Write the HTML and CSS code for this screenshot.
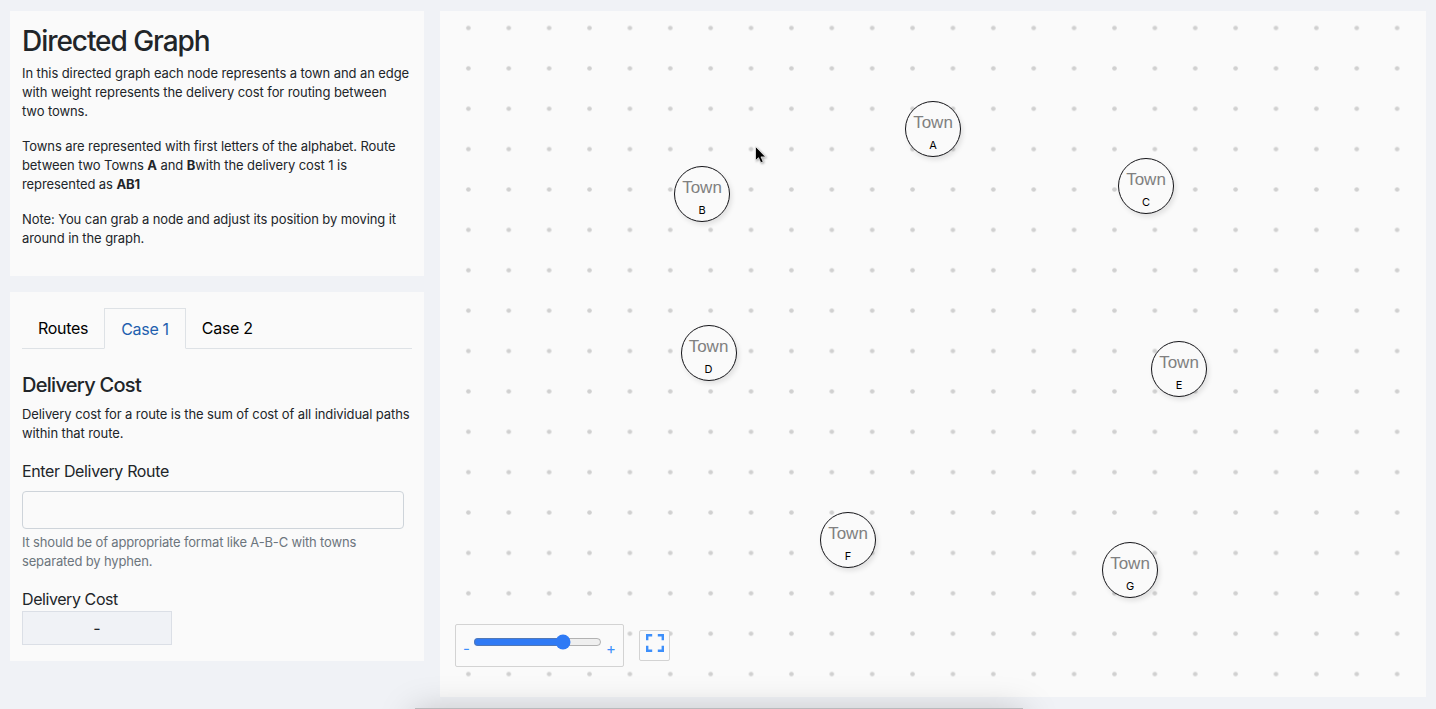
FILE: index.html
```html
<!DOCTYPE html>
<html lang="en">
<head>
<meta charset="utf-8">
<title>Directed Graph</title>
<link rel="stylesheet" href="styles.css">
</head>
<body>
<div class="page">
  <aside class="sidebar">
    <section class="card intro">
      <h1>Directed Graph</h1>
      <p>In this directed graph each node represents a town and an edge<br>with weight represents the delivery cost for routing between<br>two towns.</p>
      <p>Towns are represented with first letters of the alphabet. Route<br>between two Towns <b>A</b> and <b>B</b>with the delivery cost 1 is<br>represented as <b>AB1</b></p>
      <p>Note: You can grab a node and adjust its position by moving it<br>around in the graph.</p>
    </section>
    <section class="card cases">
      <nav class="tabs">
        <a class="tab">Routes</a>
        <a class="tab active">Case 1</a>
        <a class="tab">Case 2</a>
      </nav>
      <h2>Delivery Cost</h2>
      <p>Delivery cost for a route is the sum of cost of all individual paths<br>within that route.</p>
      <label class="label" for="route">Enter Delivery Route</label>
      <input class="route" id="route" type="text">
      <p class="hint">It should be of appropriate format like A-B-C with towns<br>separated by hyphen.</p>
      <div class="label cost-label">Delivery Cost</div>
      <div class="result">-</div>
    </section>
  </aside>
  <main class="graph">
    <svg class="grid" width="986" height="686">
      <defs>
        <pattern id="dots" x="8.2" y="-3.2" width="40.38" height="40.38" patternUnits="userSpaceOnUse">
          <circle cx="20.19" cy="20.19" r="2.3" fill="#d0d0d0"/>
        </pattern>
      </defs>
      <rect width="986" height="686" fill="url(#dots)"/>
    </svg>
    <div class="node a"><span>Town</span><small>A</small></div>
    <div class="node b"><span>Town</span><small>B</small></div>
    <div class="node c"><span>Town</span><small>C</small></div>
    <div class="node d"><span>Town</span><small>D</small></div>
    <div class="node e"><span>Town</span><small>E</small></div>
    <div class="node f"><span>Town</span><small>F</small></div>
    <div class="node g"><span>Town</span><small>G</small></div>
    <svg class="cursor" width="16" height="20" viewBox="0 0 16 20">
      <path d="M2.5 1.5v14l3-2.8 2.3 5 2.4-1-2.2-4.8h4.6z" fill="#000" stroke="#fff" stroke-width=".7"/>
    </svg>
    <div class="controls">
      <div class="zoom">
        <span class="sign">-</span>
        <input type="range" min="0" max="1000" value="726">
        <span class="sign plus">+</span>
      </div>
      <button class="fit" aria-label="Fit graph">
        <svg width="18" height="18" viewBox="0 0 18 18" fill="none" stroke="#3d8ffb" stroke-width="2.4">
          <path d="M1.2 6.2v-5h5M11.8 1.2h5v5M16.8 11.8v5h-5M6.2 16.8h-5v-5"/>
        </svg>
      </button>
    </div>
  </main>
  <div class="dock"></div>
</div>
</body>
</html>
```
FILE: styles.css
```css
* { box-sizing: border-box; }
body {
  margin: 0;
  background: #f0f2f6;
  color: #212529;
  font-family: Inter, "Liberation Sans", sans-serif;
  font-size: 16px;
  line-height: 24px;
}
.page {
  position: relative;
  display: grid;
  grid-template-columns: 414px 986px;
  gap: 16px;
  height: 709px;
  padding: 11px 10px 12px;
  overflow: hidden;
}
.sidebar { display: flex; flex-direction: column; gap: 16px; }
.card { background: #fafafa; padding: 12px; white-space: nowrap; }
.intro { height: 265px; }
.cases { height: 369px; padding-top: 16px; }
h1 { margin: 0 0 6px; padding-top: 1px; font-size: 28px; line-height: 34px; font-weight: 500; letter-spacing: -1.05px; }
h2 { margin: 24px 0 8px; font-size: 20px; line-height: 24px; font-weight: 500; letter-spacing: -0.72px; }
p { margin: 0 0 16px; font-size: 13px; line-height: 19px; letter-spacing: -0.09px; }
.tabs { display: flex; width: 390px; height: 41px; border-bottom: 1px solid #dee2e6; }
.tab { height: 41px; padding: 8px 16px; color: #000; letter-spacing: -0.3px; }
.tab.active { color: #1f5fae; background: #fafafa; border: 1px solid #dee2e6; border-bottom-color: #fafafa; }
.label { display: block; letter-spacing: -0.35px; }
.cost-label { letter-spacing: -0.42px; }
.route { display: block; width: 382px; height: 38px; margin: 8px 0 4px; border: 1px solid #ced4da; border-radius: 4px; background: #fafafa; }
.hint { color: #6c757d; letter-spacing: -0.16px; }
.result { width: 150px; height: 34px; border: 1px solid #dbdfe6; background: #f0f2f6; text-align: center; line-height: 32px; }
.graph { position: relative; display: flex; align-items: flex-end; background: #fafafa; height: 686px; }
.grid { position: absolute; inset: 0; }
.node {
  position: absolute;
  display: flex;
  flex-direction: column;
  align-items: center;
  width: 56px;
  height: 56px;
  padding-top: 8px;
  border: 1.2px solid #151519;
  border-radius: 50%;
  background: #fafafa;
  box-shadow: 2px 3px 5px rgba(0, 0, 0, .1);
}
.node span { color: #808080; font-family: "Liberation Sans", Arial, sans-serif; font-size: 17px; line-height: 26px; }
.node small { color: #000; font-size: 11px; line-height: 18px; }
.a { left: 465px; top: 90px; }
.b { left: 234px; top: 155px; }
.c { left: 678px; top: 147px; }
.d { left: 240.5px; top: 314px; }
.e { left: 711px; top: 330px; }
.f { left: 380px; top: 501px; }
.g { left: 662px; top: 531px; }
.cursor { position: absolute; left: 313px; top: 134px; filter: drop-shadow(1px 1px 1px rgba(0, 0, 0, .35)); }
.controls { position: relative; display: flex; gap: 15px; align-items: center; padding: 0 0 30px 15px; }
.zoom { display: flex; width: 169px; height: 43px; padding: 0 7px; background: #fafafa; border: 1px solid #d3d3d3; border-radius: 2px; }
.zoom input { width: 129px; height: 16px; margin: 9px 2px 0; accent-color: #2f7af5; }
.sign { flex: none; width: 8px; padding-top: 12px; color: #3d8ffb; font-size: 15px; }
.plus { padding-left: 2px; }
.fit { display: flex; justify-content: center; width: 31px; height: 31px; padding: 3px 0 0; background: #fafafa; border: 1px solid #d3d3d3; border-radius: 2px; }
.dock { position: absolute; left: 415px; top: 708px; width: 608px; height: 30px; background: #b9b9bc; box-shadow: 0 6px 36px rgba(0, 0, 0, .26); }
```
